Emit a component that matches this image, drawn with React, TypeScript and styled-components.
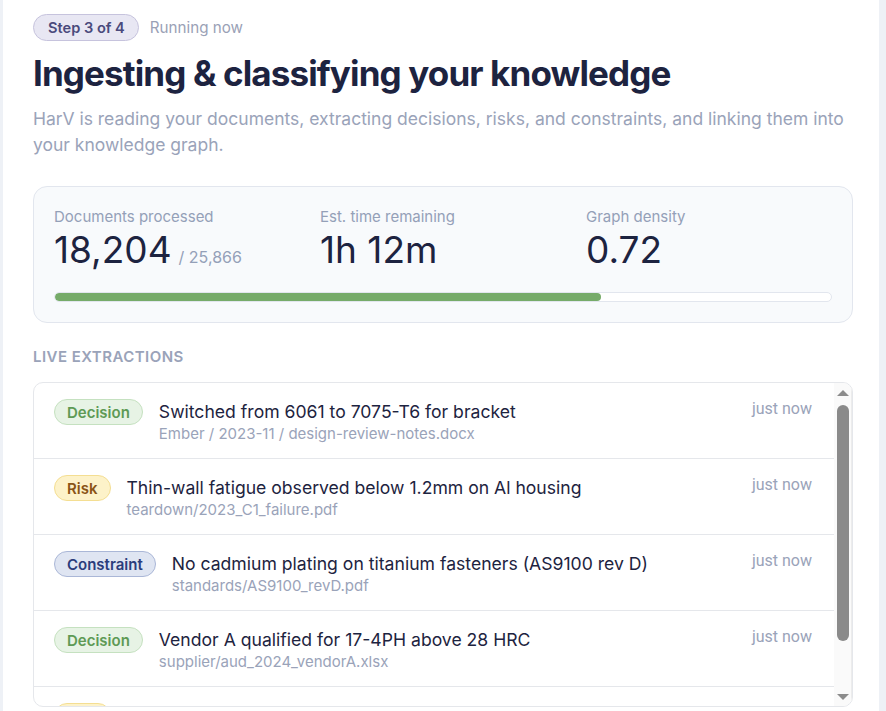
import styled, { createGlobalStyle } from 'styled-components';

const GlobalStyle = createGlobalStyle`
  html, body {
    margin: 0;
    padding: 0;
    background: #eef1f6;
    font-family: 'Inter', 'Noto Sans', sans-serif;
    overflow: hidden;
  }
  * { box-sizing: border-box; }
`;

type Kind = 'decision' | 'risk' | 'constraint';

const kinds: Record<Kind, { label: string; bg: string; border: string; color: string }> = {
  decision: { label: 'Decision', bg: '#e7f3e5', border: '#c5e1c0', color: '#5e9a55' },
  risk: { label: 'Risk', bg: '#fdf2c9', border: '#f4de92', color: '#8a5516' },
  constraint: { label: 'Constraint', bg: '#dfe5f2', border: '#aab7d7', color: '#2b3d7c' },
};

const extractions: { kind: Kind; title: string; source: string }[] = [
  { kind: 'decision', title: 'Switched from 6061 to 7075-T6 for bracket', source: 'Ember / 2023-11 / design-review-notes.docx' },
  { kind: 'risk', title: 'Thin-wall fatigue observed below 1.2mm on Al housing', source: 'teardown/2023_C1_failure.pdf' },
  { kind: 'constraint', title: 'No cadmium plating on titanium fasteners (AS9100 rev D)', source: 'standards/AS9100_revD.pdf' },
  { kind: 'decision', title: 'Vendor A qualified for 17-4PH above 28 HRC', source: 'supplier/aud_2024_vendorA.xlsx' },
  { kind: 'risk', title: 'Seal creep at elevated temperature on gasket set B', source: 'lab/thermal_cycle_2024.csv' },
];

const processed = 18204;
const total = 25866;

export default function App() {
  const pct = (processed / total) * 100;
  return (
    <>
      <GlobalStyle />
      <Panel>
        <StepRow>
          <StepBadge>Step 3 of 4</StepBadge>
          <StepStatus>Running now</StepStatus>
        </StepRow>
        <Title>Ingesting &amp; classifying your knowledge</Title>
        <Subtitle>
          HarV is reading your documents, extracting decisions, risks, and constraints, and linking them into
          your knowledge graph.
        </Subtitle>

        <StatsCard>
          <StatsGrid>
            <Stat>
              <StatLabel>Documents processed</StatLabel>
              <StatValue>
                {processed.toLocaleString('en-US')}
                <StatTotal>/ {total.toLocaleString('en-US')}</StatTotal>
              </StatValue>
            </Stat>
            <Stat>
              <StatLabel>Est. time remaining</StatLabel>
              <StatValue>1h 12m</StatValue>
            </Stat>
            <Stat>
              <StatLabel>Graph density</StatLabel>
              <StatValue>0.72</StatValue>
            </Stat>
          </StatsGrid>
          <Track>
            <Fill style={{ width: `${pct}%` }} />
          </Track>
        </StatsCard>

        <SectionLabel>Live extractions</SectionLabel>
        <List>
          <ScrollArea>
            {extractions.map((item, i) => {
              const k = kinds[item.kind];
              return (
                <Row key={i}>
                  <Tag $bg={k.bg} $border={k.border} $color={k.color}>
                    {k.label}
                  </Tag>
                  <RowBody>
                    <RowTitle>{item.title}</RowTitle>
                    <RowSource>{item.source}</RowSource>
                  </RowBody>
                  <RowTime>just now</RowTime>
                </Row>
              );
            })}
          </ScrollArea>
          <ScrollRail>
            <Arrow $dir="up" />
            <RailTrack>
              <Thumb />
            </RailTrack>
            <Arrow $dir="down" />
          </ScrollRail>
        </List>
      </Panel>
    </>
  );
}

const Panel = styled.main`
  margin-left: 3px;
  width: 876px;
  height: 100vh;
  background: #ffffff;
  padding: 14px 0 0 30px;
  display: flex;
  flex-direction: column;
`;

const StepRow = styled.div`
  display: flex;
  align-items: center;
  gap: 11px;
`;

const StepBadge = styled.span`
  display: inline-flex;
  align-items: center;
  height: 27px;
  padding: 0 13px 0 14px;
  border-radius: 14px;
  background: #e8e7f3;
  border: 1px solid #c6c3dd;
  color: #4a4a7c;
  font-size: 14.6px;
  font-weight: 600;
`;

const StepStatus = styled.span`
  color: #9aa1b6;
  font-size: 15.2px;
`;

const Title = styled.h1`
  margin: 10px 0 0;
  font-size: 35px;
  line-height: 44px;
  font-weight: 700;
  letter-spacing: -0.025em;
  color: #1d2340;
`;

const Subtitle = styled.p`
  margin: 11px 0 0;
  width: 820px;
  font-size: 17.5px;
  line-height: 26px;
  color: #9aa3b9;
`;

const StatsCard = styled.section`
  margin-top: 28px;
  width: 820px;
  background: #f8fafc;
  border: 1px solid #e2e6ee;
  border-radius: 14px;
  padding: 20px 20px 20px 20px;
`;

const StatsGrid = styled.div`
  display: grid;
  grid-template-columns: 266px 266px 1fr;
`;

const Stat = styled.div`
  display: flex;
  flex-direction: column;
`;

const StatLabel = styled.span`
  font-size: 15px;
  line-height: 20px;
  color: #94a0b8;
`;

const StatValue = styled.span`
  margin-top: 2px;
  font-size: 37px;
  line-height: 42px;
  color: #1d2340;
`;

const StatTotal = styled.span`
  margin-left: 7px;
  font-size: 16px;
  color: #94a0b8;
`;

const Track = styled.div`
  margin-top: 14px;
  height: 10px;
  border-radius: 5px;
  background: #ffffff;
  border: 1px solid #e2e6ee;
  overflow: hidden;
`;

const Fill = styled.div`
  height: 100%;
  background: #76ab69;
  border-radius: 5px;
`;

const SectionLabel = styled.h2`
  margin: 24px 0 0;
  font-size: 15px;
  line-height: 20px;
  font-weight: 600;
  text-transform: uppercase;
  letter-spacing: 0.03em;
  color: #9aa3b9;
`;

const List = styled.div`
  margin-top: 15px;
  width: 820px;
  height: 325px;
  display: flex;
  border: 1px solid #e5e7eb;
  border-radius: 10px;
  overflow: hidden;
  background: #ffffff;
`;

const ScrollArea = styled.div`
  flex: 1;
  min-width: 0;
  overflow: hidden;
`;

const ScrollRail = styled.div`
  flex: none;
  width: 18px;
  display: flex;
  flex-direction: column;
  align-items: center;
  background: #fafafa;
  border-right: 1px solid #ececec;
`;

const Arrow = styled.div<{ $dir: 'up' | 'down' }>`
  flex: none;
  height: 17px;
  width: 100%;
  display: flex;
  justify-content: center;
  align-items: center;

  &::before {
    content: '';
    width: 0;
    height: 0;
    border-left: 6px solid transparent;
    border-right: 6px solid transparent;
    ${(p) =>
      p.$dir === 'up'
        ? 'border-bottom: 6px solid #8c8c8c; margin-top: 2px;'
        : 'border-top: 6px solid #8c8c8c; margin-bottom: 2px;'}
  }
`;

const RailTrack = styled.div`
  flex: 1;
  width: 100%;
  display: flex;
  justify-content: center;
  padding-top: 5px;
`;

const Thumb = styled.div`
  width: 12px;
  height: 236px;
  border-radius: 6px;
  background: #8a8a8a;
`;

const Row = styled.div`
  display: flex;
  align-items: flex-start;
  gap: 16px;
  height: 76px;
  padding: 16px 22px 0 20px;
  border-bottom: 1px solid #e5e7eb;
`;

const Tag = styled.span<{ $bg: string; $border: string; $color: string }>`
  flex: none;
  display: inline-flex;
  align-items: center;
  height: 26px;
  padding: 0 12px;
  border-radius: 13px;
  background: ${(p) => p.$bg};
  border: 1px solid ${(p) => p.$border};
  color: ${(p) => p.$color};
  font-size: 15px;
  font-weight: 600;
`;

const RowBody = styled.div`
  flex: 1;
  display: flex;
  flex-direction: column;
  padding-top: 1px;
`;

const RowTitle = styled.span`
  font-size: 17.6px;
  line-height: 23px;
  color: #1d2340;
`;

const RowSource = styled.span`
  margin-top: 1px;
  font-size: 15px;
  line-height: 20px;
  color: #9aa3b9;
`;

const RowTime = styled.span`
  flex: none;
  margin-top: 0;
  font-family: 'Roboto', 'Inter', sans-serif;
  font-size: 16px;
  line-height: 20px;
  color: #9aa3b9;
`;
